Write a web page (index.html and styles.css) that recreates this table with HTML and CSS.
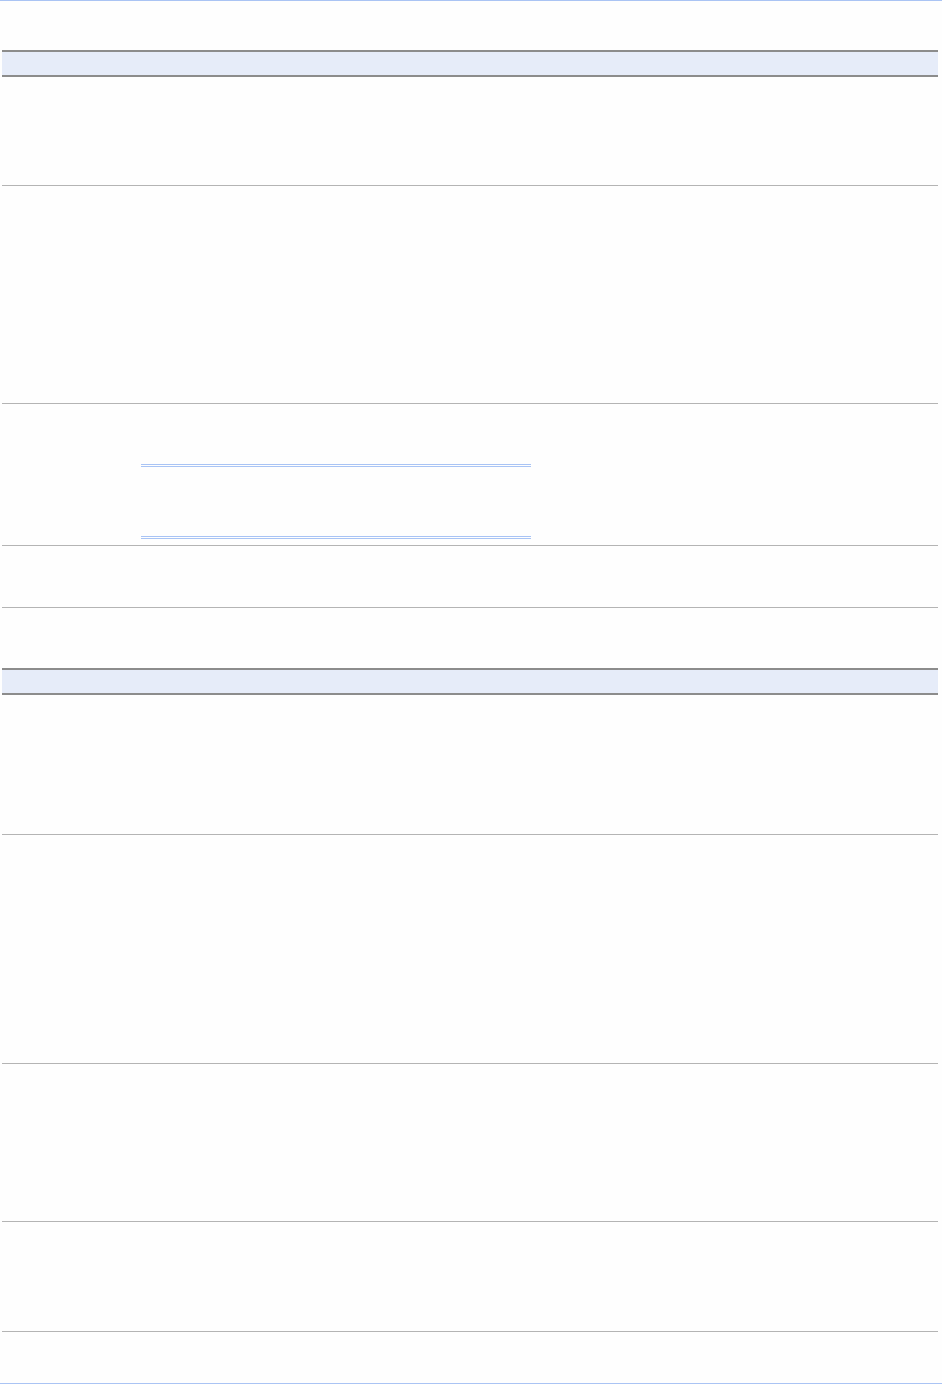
FILE: index.html
```html
<!DOCTYPE html>
<html lang="en">
<head>
  <meta charset="UTF-8">
  <title>Form</title>
  <link rel="stylesheet" href="styles.css">
</head>
<body>
  <div class="topline"></div>

  <div class="page">
    <!-- first block -->
    <div class="sheet">
      <div class="head"></div>
      <div class="row r1"></div>
      <div class="row r2"></div>
      <div class="row r3">
        <div class="rule"></div>
        <div class="rule-gap"></div>
        <div class="rule"></div>
      </div>
      <div class="row r4"></div>
    </div>

    <!-- second block -->
    <div class="sheet second">
      <div class="head"></div>
      <div class="row r5"></div>
      <div class="row r6"></div>
      <div class="row r7"></div>
      <div class="row r8"></div>
    </div>
  </div>

  <div class="bottomline"></div>
</body>
</html>
```

FILE: styles.css
```css
body {
  margin: 0;
  background: #fefefe;
  font-family: "Liberation Sans", Arial, sans-serif;
  font-size: 13px;
  color: #333;
}

.topline {
  border-top: 1px solid #aac4f4;
}

.page {
  padding: 49px 4px 0 2px;
}

.sheet {
  display: flex;
  flex-direction: column;
}
.sheet.second {
  margin-top: 60px;
}

.head {
  height: 23px;
  background-color: #e6ecf9;
  border-top: 2px solid #8c8c8c;
  border-bottom: 2px solid #8c8c8c;
}

.row {
  border-bottom: 1px solid #b4b4b4;
}
.r1 { height: 108px; }
.r2 { height: 217px; }
.r3 {
  padding: 60px 0 0 139px;
  height: 81px;
  display: flex;
  flex-direction: column;
}
.r4 { height: 61px; }
.r5 { height: 139px; }
.r6 { height: 228px; }
.r7 { height: 157px; }
.r8 { height: 109px; }

.rule {
  width: 390px;
  height: 1px;
  border-top: 1px solid #a9c4f5;
  border-bottom: 1px solid #a9c4f5;
}
.rule-gap {
  height: 69px;
}

.bottomline {
  margin-top: 51px;
  border-top: 1px solid #aac4f4;
}
```
